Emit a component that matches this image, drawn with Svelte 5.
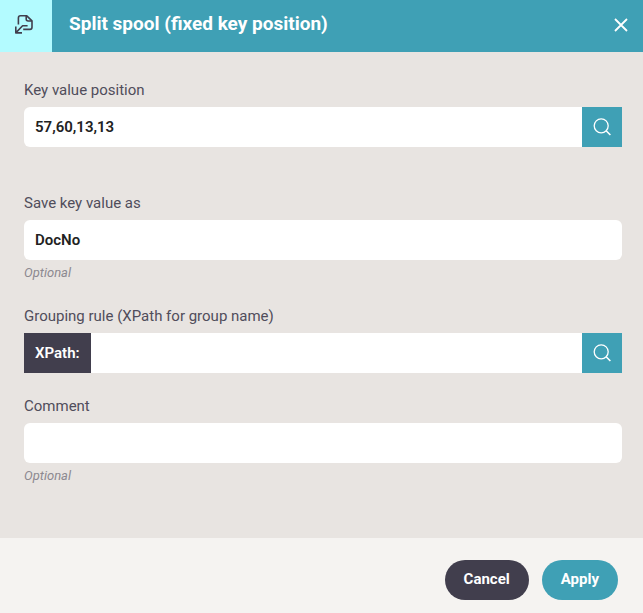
<script lang="ts">
	let keyPosition = "57,60,13,13";
	let keyName = "DocNo";
	let xpath = "";
	let comment = "";
</script>

<svelte:head>
	<title>Split spool</title>
</svelte:head>

{#snippet searchIcon()}
	<svg width="18" height="18" viewBox="0 0 18 18" fill="none" stroke="currentColor" aria-hidden="true">
		<circle cx="8.2" cy="7.8" r="7" stroke-width="1.3"/>
		<path d="M13.1 12.7L17.4 17" stroke-width="1.6"/>
	</svg>
{/snippet}

<form class="dialog" on:submit|preventDefault>
	<header>
		<div class="badge">
			<svg width="20" height="20" viewBox="0 0 20 20" fill="none" stroke="currentColor" stroke-width="1.6" stroke-linejoin="round" aria-hidden="true">
				<path d="M4.4 10.4V3.9Q4.4 1.8 6.5 1.8H12.8L18 6.8V13.3Q18 15.4 15.9 15.4H9.2"/>
				<path d="M12.2 1.8V5Q12.2 7 14.2 7H18"/>
				<path d="M13.6 11.7H8.6L2 18.6M1.8 12.6V18.9H8"/>
			</svg>
		</div>
		<h1>Split spool (fixed key position)</h1>
		<button type="button" class="close" aria-label="Close">
			<svg width="14" height="14" viewBox="0 0 14 14" stroke="currentColor" stroke-width="1.8" aria-hidden="true">
				<path d="M1 1L13 13M13 1L1 13"/>
			</svg>
		</button>
	</header>

	<main>
		<div class="group">
			<label for="key-position">Key value position</label>
			<div class="field">
				<input id="key-position" type="text" bind:value={keyPosition}/>
				<button type="button" class="search" aria-label="Select position">{@render searchIcon()}</button>
			</div>
			<p class="hint"></p>
		</div>

		<div class="group">
			<label for="key-name">Save key value as</label>
			<div class="field">
				<input id="key-name" type="text" bind:value={keyName}/>
			</div>
			<p class="hint">Optional</p>
		</div>

		<div class="group">
			<label for="xpath">Grouping rule (XPath for group name)</label>
			<div class="field">
				<span class="prefix">XPath:</span>
				<input id="xpath" type="text" bind:value={xpath}/>
				<button type="button" class="search" aria-label="Select group">{@render searchIcon()}</button>
			</div>
		</div>

		<div class="group">
			<label for="comment">Comment</label>
			<div class="field">
				<input id="comment" type="text" bind:value={comment}/>
			</div>
			<p class="hint">Optional</p>
		</div>
	</main>

	<footer>
		<button type="button" class="action cancel">Cancel</button>
		<button type="submit" class="action">Apply</button>
	</footer>
</form>

<style>
:global(body){
	margin: 0;
	background-color: #f5f3f1;
}

.dialog, input, button{
	font-family: Roboto, "Liberation Sans", sans-serif;
}

button{
	border: 0;
	padding: 0;
	color: #fff;
	cursor: pointer;
}

svg{
	display: block;
}

header{
	display: flex;
	align-items: center;
	height: 52px;
	background-color: #3fa0b5;
	color: #fff;
}

.badge{
	display: flex;
	align-items: center;
	justify-content: center;
	align-self: stretch;
	width: 52px;
	padding: 0 4px 4px 0;
	box-sizing: border-box;
	background-color: #b3fbff;
	color: #413e4d;
}

h1{
	flex: 1;
	margin: 0;
	padding: 0 17px 4px;
	font-size: 19px;
	line-height: 24px;
	font-weight: 700;
}

.close{
	padding: 13px 15px 16px;
	background: none;
}

main{
	display: flex;
	flex-direction: column;
	gap: 23px;
	padding: 28px 21px 52px 24px;
	background-color: #e8e4e1;
}

label{
	display: block;
	margin-bottom: 7px;
	font-size: 15px;
	line-height: 20px;
	color: #504d5b;
}

.field{
	display: flex;
	height: 40px;
}

input{
	flex: 1;
	min-width: 0;
	border: 0;
	border-radius: 6px;
	padding: 0 11px 1px;
	background-color: #fff;
	color: #222;
	font-size: 15px;
	font-weight: 600;
}

input:not(:last-child){
	border-top-right-radius: 0;
	border-bottom-right-radius: 0;
}

.prefix + input{
	border-radius: 0;
}

.prefix{
	display: flex;
	align-items: center;
	padding: 0 11px;
	background-color: #413e4d;
	color: #fff;
	font-size: 15px;
	font-weight: 600;
}

.search{
	display: flex;
	align-items: center;
	justify-content: center;
	width: 40px;
	background-color: #3fa0b5;
}

.hint{
	height: 20px;
	margin: 3px 0 0;
	font-size: 13px;
	line-height: 20px;
	font-style: italic;
	color: #8c8990;
}

footer{
	display: flex;
	justify-content: flex-end;
	gap: 13px;
	padding: 22px 25px 13px;
	background-color: #f5f3f1;
}

.action{
	height: 40px;
	padding: 0 19px 2px;
	border-radius: 20px;
	background-color: #3fa0b5;
	font-size: 15px;
	font-weight: 700;
}

.cancel{
	background-color: #413e4d;
}
</style>
